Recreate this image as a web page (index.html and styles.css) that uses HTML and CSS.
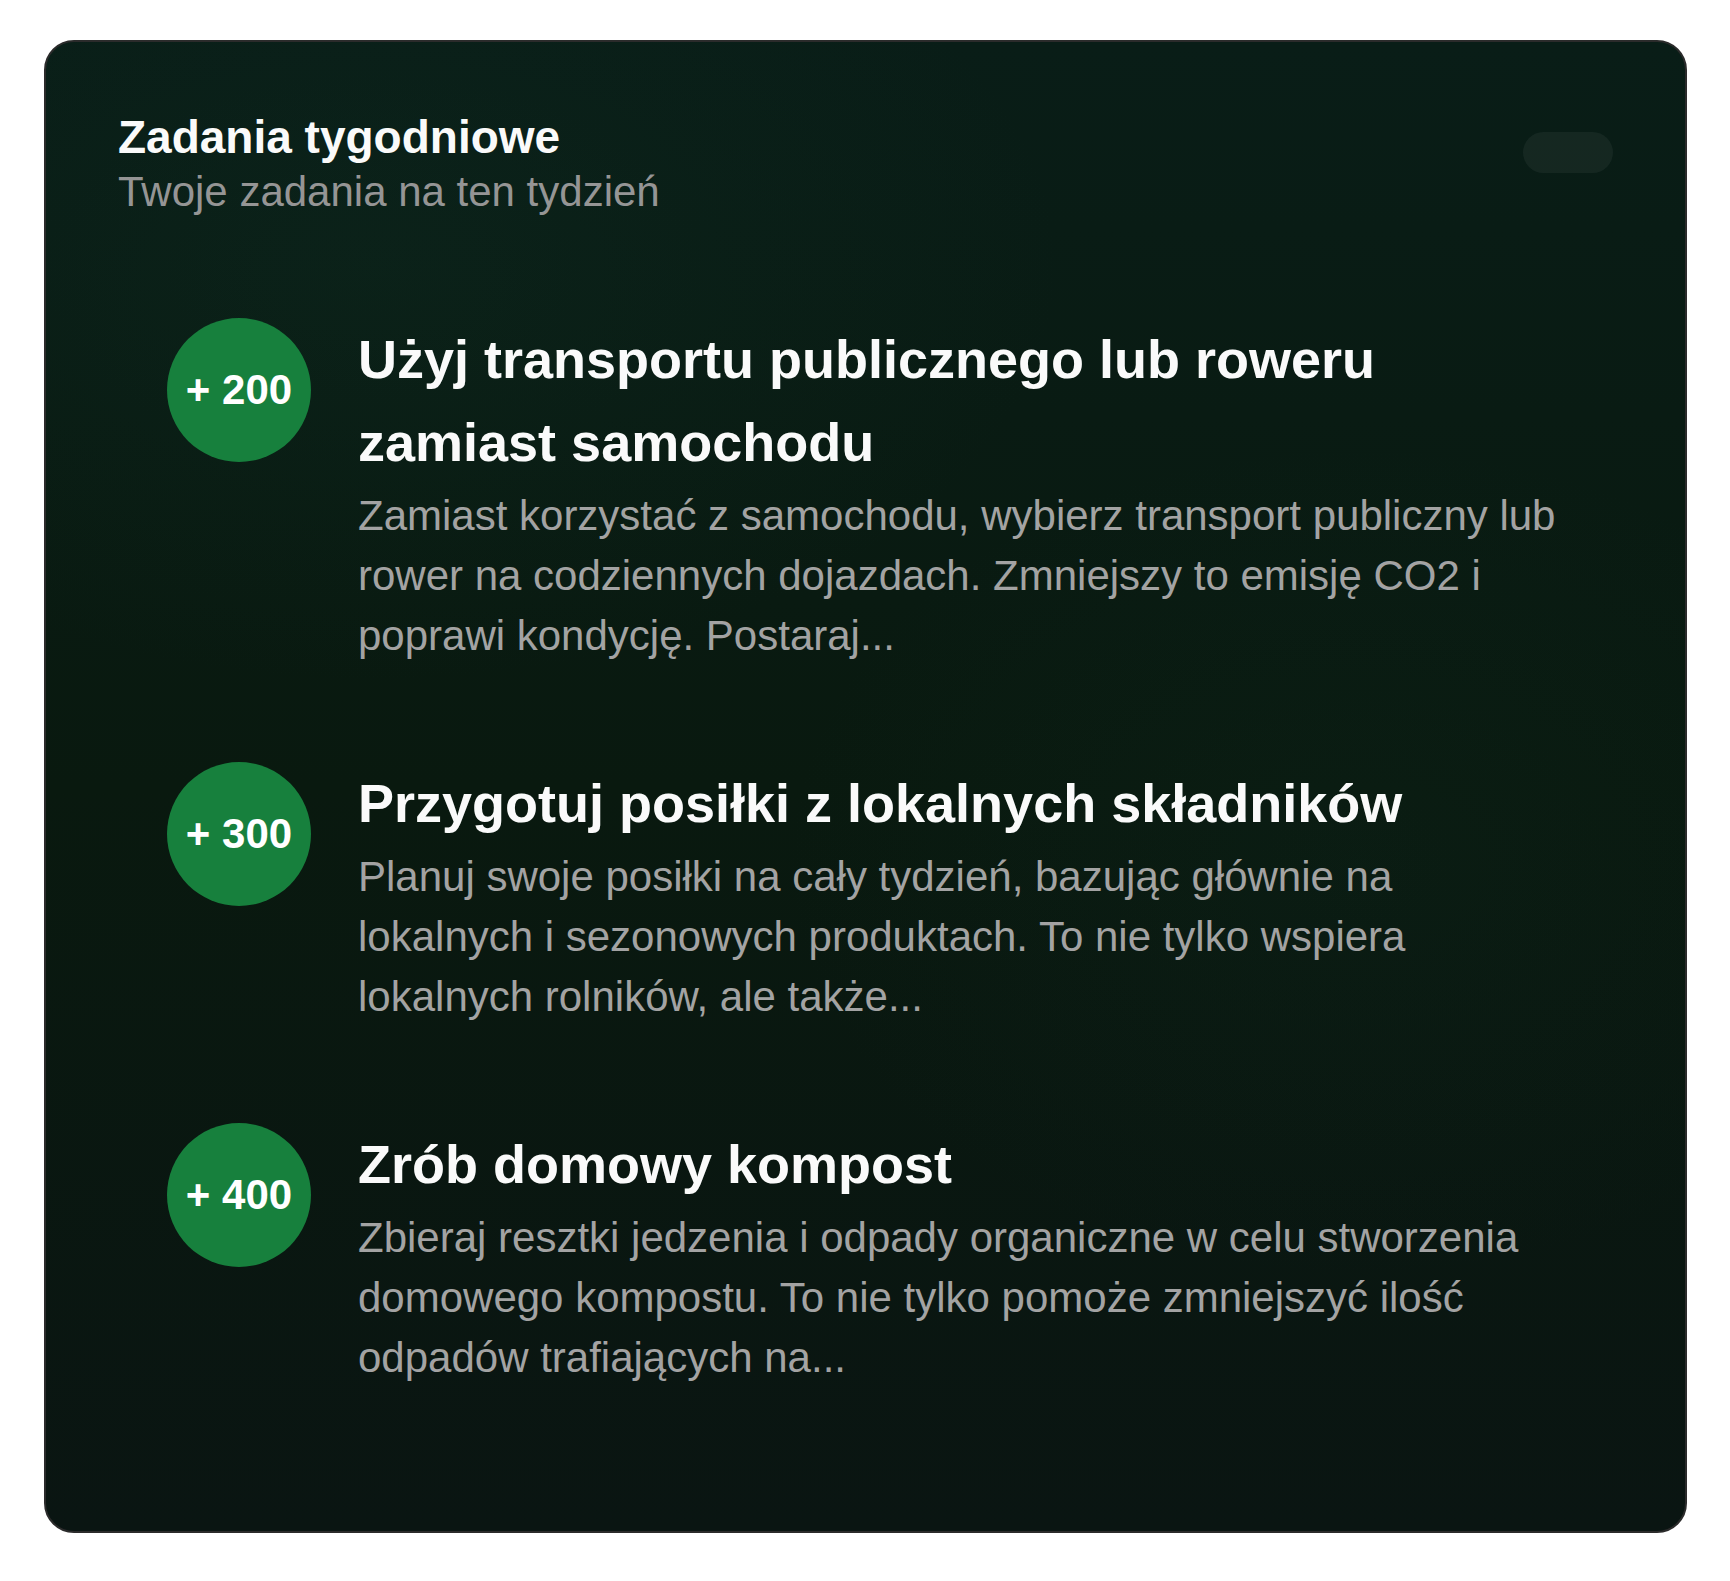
FILE: index.html
```html
<!DOCTYPE html>
<html lang="pl">
<head>
<meta charset="utf-8">
<title>Zadania tygodniowe</title>
<link rel="stylesheet" href="styles.css">
</head>
<body>
<section class="card">
  <header class="card-header">
    <div class="heading">
      <h1 class="title">Zadania tygodniowe</h1>
      <p class="subtitle">Twoje zadania na ten tydzień</p>
    </div>
    <div class="pill"></div>
  </header>
  <ul class="tasks">
    <li class="task">
      <div class="points">+ 200</div>
      <div class="task-body">
        <h2 class="task-title">Użyj transportu publicznego lub roweru zamiast samochodu</h2>
        <p class="task-desc">Zamiast korzystać z samochodu, wybierz transport publiczny lub rower na codziennych dojazdach. Zmniejszy to emisję CO2 i poprawi kondycję. Postaraj...</p>
      </div>
    </li>
    <li class="task">
      <div class="points">+ 300</div>
      <div class="task-body">
        <h2 class="task-title">Przygotuj posiłki z lokalnych składników</h2>
        <p class="task-desc">Planuj swoje posiłki na cały tydzień, bazując głównie na lokalnych i sezonowych produktach. To nie tylko wspiera lokalnych rolników, ale także...</p>
      </div>
    </li>
    <li class="task">
      <div class="points">+ 400</div>
      <div class="task-body">
        <h2 class="task-title">Zrób domowy kompost</h2>
        <p class="task-desc">Zbieraj resztki jedzenia i odpady organiczne w celu stworzenia domowego kompostu. To nie tylko pomoże zmniejszyć ilość odpadów trafiających na...</p>
      </div>
    </li>
  </ul>
</section>
</body>
</html>
```

FILE: styles.css
```css
* {
  box-sizing: border-box;
}

html, body {
  background: #ffffff;
}

body {
  margin: 0;
  padding: 40px 43px 48px 44px;
  font-family: "Liberation Sans", Arial, sans-serif;
}

.card {
  border: 2px solid #2b2b2b;
  border-radius: 30px;
  padding: 72px 72px 72px 72px;
  background:
    radial-gradient(ellipse 60% 40% at 20% 15%, rgba(20, 60, 45, 0.18), rgba(0, 0, 0, 0) 70%),
    radial-gradient(ellipse 50% 40% at 80% 55%, rgba(20, 55, 45, 0.12), rgba(0, 0, 0, 0) 70%),
    linear-gradient(180deg, #091d17 0%, #09190f 50%, #0a1512 100%);
}

.card-header {
  display: flex;
  justify-content: space-between;
  align-items: flex-start;
}

.title {
  margin: 0;
  font-size: 46px;
  line-height: 1;
  font-weight: 700;
  color: #fafafa;
}

.subtitle {
  margin: 2px 0 0;
  font-size: 42px;
  line-height: 60px;
  color: #959595;
}

.pill {
  width: 90px;
  height: 41px;
  margin-top: 18px;
  border-radius: 999px;
  background: rgba(255, 255, 255, 0.05);
}

.tasks {
  list-style: none;
  margin: 96px 0 0;
  padding: 0 49px 71px 49px;
  display: flex;
  flex-direction: column;
  gap: 96px;
}

.task {
  display: flex;
  align-items: flex-start;
  gap: 47px;
}

.points {
  flex: none;
  width: 144px;
  height: 144px;
  border-radius: 50%;
  background: #17803d;
  color: #ffffff;
  font-size: 42px;
  font-weight: 700;
  display: flex;
  align-items: center;
  justify-content: center;
}

.task-body {
  flex: 1;
  min-width: 0;
}

.task-title {
  margin: 0;
  font-size: 54px;
  line-height: 83px;
  font-weight: 700;
  color: #fafafa;
}

.task-desc {
  margin: 2px 0 0;
  font-size: 42px;
  line-height: 60px;
  color: #a3a3a3;
}
```
